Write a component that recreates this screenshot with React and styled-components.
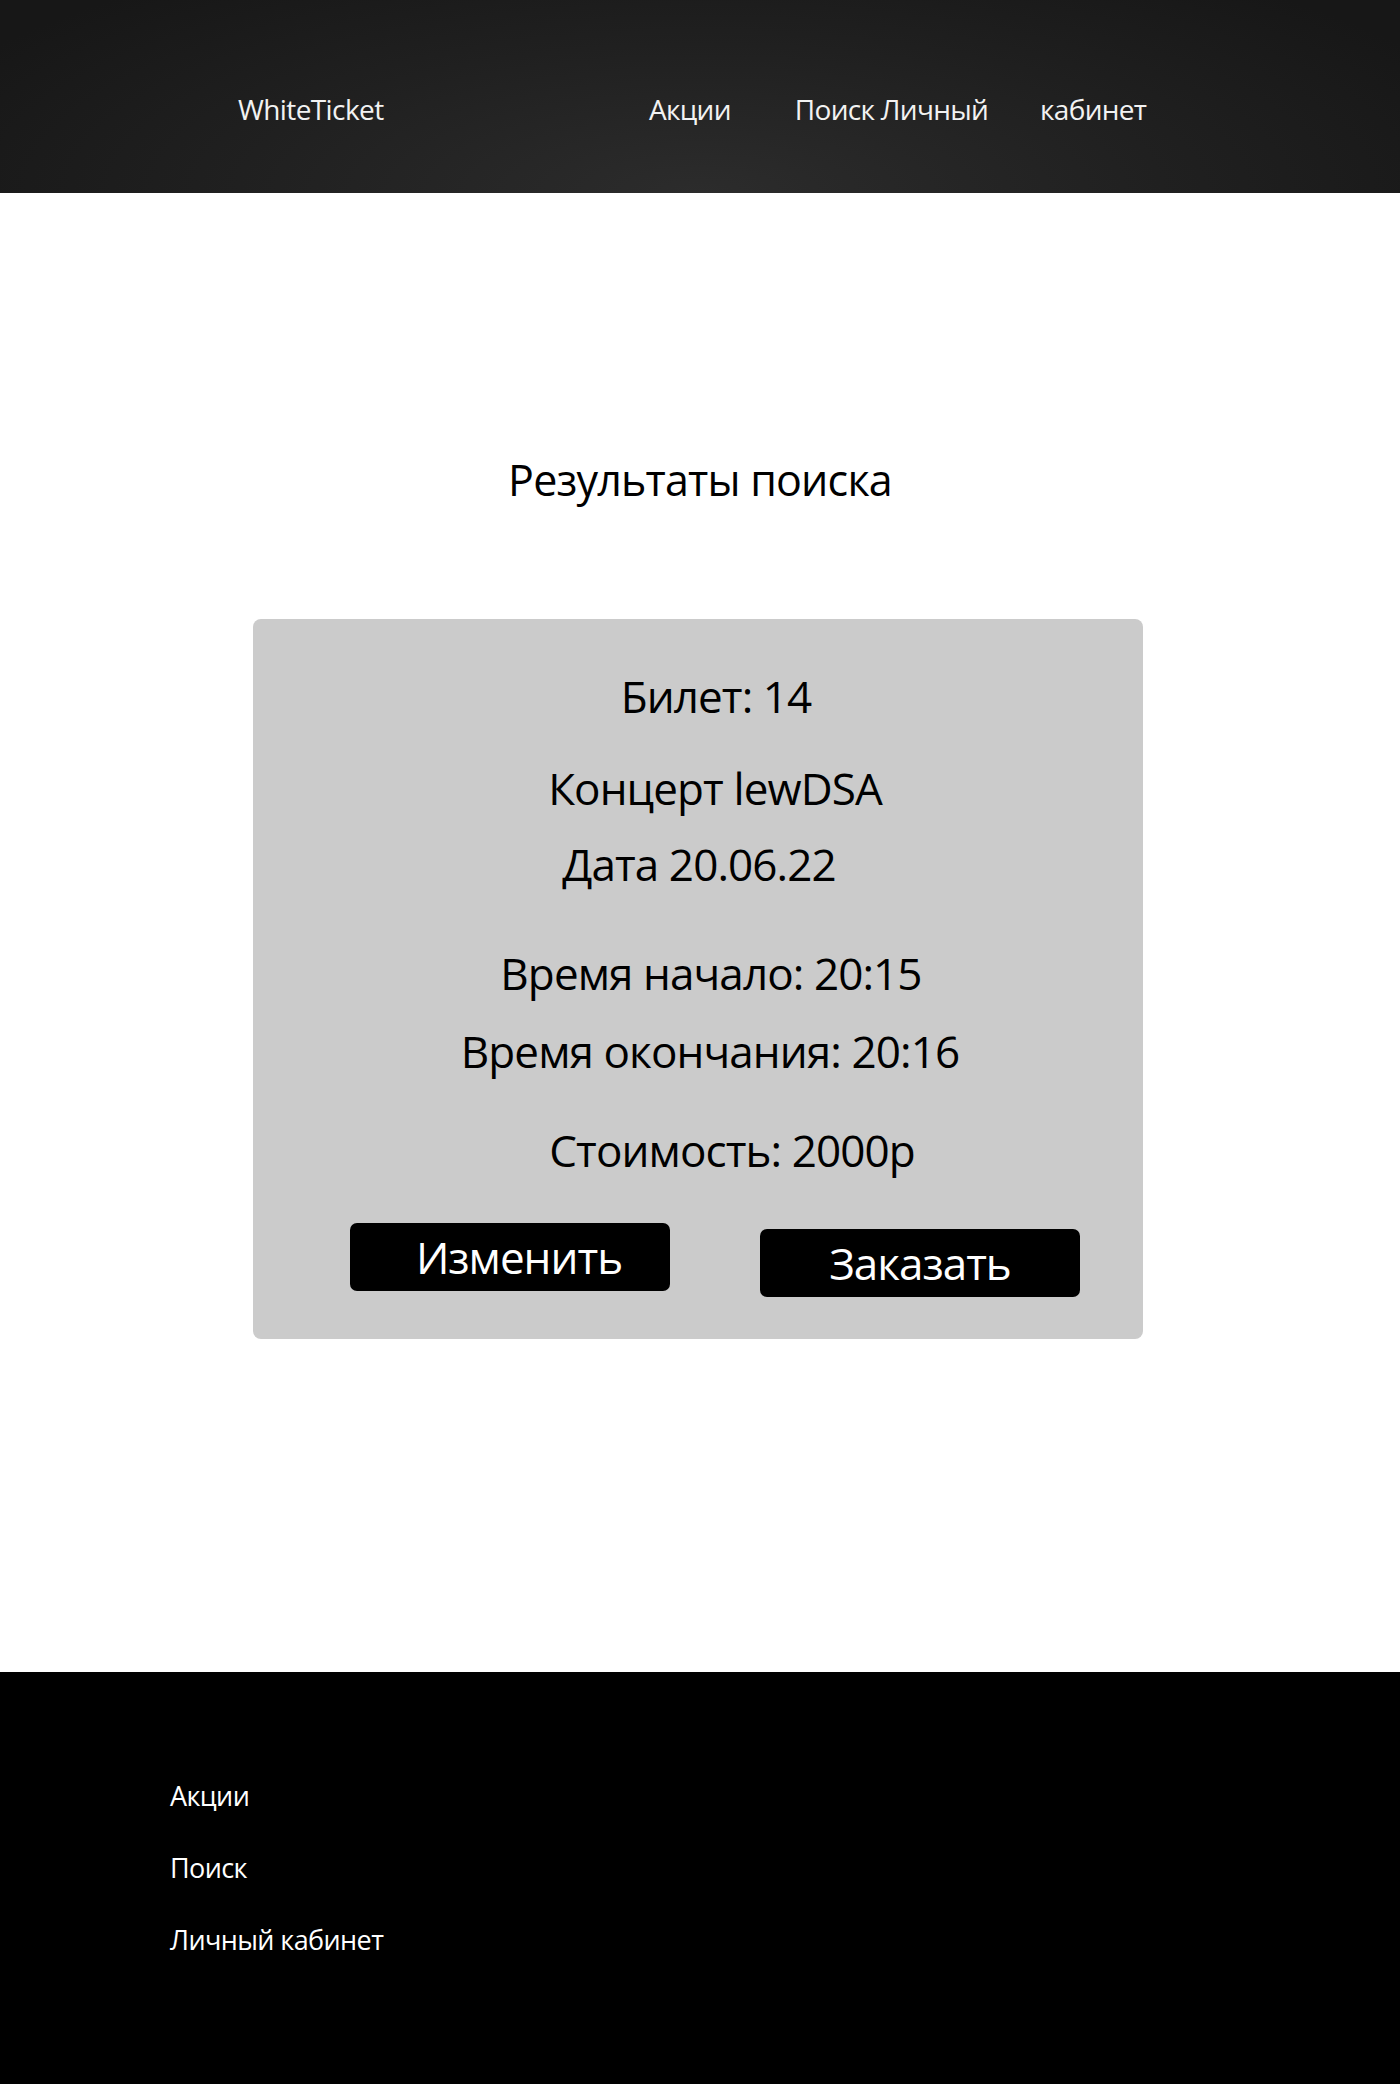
import React from "react";
import styled, { createGlobalStyle } from "styled-components";

const Global = createGlobalStyle`
  html, body { margin: 0; padding: 0; background: #ffffff; }
  body { font-family: "Open Sans", "Noto Sans", "DejaVu Sans", sans-serif; }
  * { box-sizing: border-box; }
`;

const Page = styled.div`
  width: 1400px;
  min-height: 2084px;
  display: flex;
  flex-direction: column;
`;

const Header = styled.header`
  height: 193px;
  display: flex;
  align-items: center;
  padding: 24px 0 0 238px;
  background: radial-gradient(ellipse 60% 140% at 50% 100%, #2c2c2c 0%, #202020 55%, #171717 100%);
`;

const Logo = styled.div`
  width: 411px;
  color: #f2f2f2;
  font-size: 28px;
  letter-spacing: -0.6px;
  line-height: 1;
`;

const Nav = styled.nav`
  display: flex;
  align-items: center;
`;

const NavLink = styled.a`
  margin-left: ${(p) => p.$gap}px;
  color: #f2f2f2;
  font-size: 28px;
  letter-spacing: -0.7px;
  line-height: 1;
  text-decoration: none;
`;

const Main = styled.main`
  flex: 1;
  display: flex;
  flex-direction: column;
  align-items: center;
  padding-top: 265px;
  padding-bottom: 332px;
`;

const Title = styled.h1`
  margin: 0 0 117px 0;
  font-weight: 400;
  font-size: 43px;
  line-height: 44px;
  letter-spacing: -0.8px;
  color: #000;
`;

const Card = styled.section`
  width: 890px;
  margin-left: -4px;
  background: #cbcbcb;
  border-radius: 8px;
  padding: 52px 0 42px 0;
  display: flex;
  flex-direction: column;
`;

const Line = styled.p`
  margin: ${(p) => p.$gap}px 0 0 0;
  padding-left: ${(p) => p.$shift * 2}px;
  text-align: center;
  font-size: 44px;
  line-height: 50px;
  letter-spacing: -0.9px;
  color: #000;
`;

const Buttons = styled.div`
  display: flex;
  align-items: flex-start;
  gap: 90px;
  padding-left: 97px;
  margin-top: 48px;
`;

const Button = styled.button`
  width: 320px;
  height: 68px;
  margin-top: ${(p) => p.$drop}px;
  padding: 0 0 0 ${(p) => p.$shift * 2}px;
  border: none;
  border-radius: 7px;
  background: #000;
  color: #fff;
  font-family: inherit;
  font-size: 44px;
  letter-spacing: -1px;
  line-height: 68px;
  cursor: pointer;
`;

const Footer = styled.footer`
  height: 412px;
  background: #000;
  padding: 106px 0 0 170px;
  display: flex;
  flex-direction: column;
  gap: 36px;
`;

const FooterLink = styled.a`
  color: #fff;
  font-size: 27px;
  line-height: 36px;
  letter-spacing: -0.6px;
  text-decoration: none;
`;

const lines = [
  { text: "Билет: 14", gap: 0, shift: 18 },
  { text: "Концерт lewDSA", gap: 42, shift: 17 },
  { text: "Дата 20.06.22", gap: 26, shift: 1 },
  { text: "Время начало: 20:15", gap: 59, shift: 13 },
  { text: "Время окончания: 20:16", gap: 28, shift: 12 },
  { text: "Стоимость: 2000р", gap: 49, shift: 34 },
];

export default function App() {
  return (
    <>
      <Global />
      <Page>
        <Header>
          <Logo>WhiteTicket</Logo>
          <Nav>
            <NavLink href="#" $gap={0}>Акции</NavLink>
            <NavLink href="#" $gap={64}>Поиск Личный</NavLink>
            <NavLink href="#" $gap={52}>кабинет</NavLink>
          </Nav>
        </Header>
        <Main>
          <Title>Результаты поиска</Title>
          <Card>
            {lines.map((l) => (
              <Line key={l.text} $gap={l.gap} $shift={l.shift}>
                {l.text}
              </Line>
            ))}
            <Buttons>
              <Button $drop={0} $shift={9}>Изменить</Button>
              <Button $drop={6} $shift={0}>Заказать</Button>
            </Buttons>
          </Card>
        </Main>
        <Footer>
          <FooterLink href="#">Акции</FooterLink>
          <FooterLink href="#">Поиск</FooterLink>
          <FooterLink href="#">Личный кабинет</FooterLink>
        </Footer>
      </Page>
    </>
  );
}
